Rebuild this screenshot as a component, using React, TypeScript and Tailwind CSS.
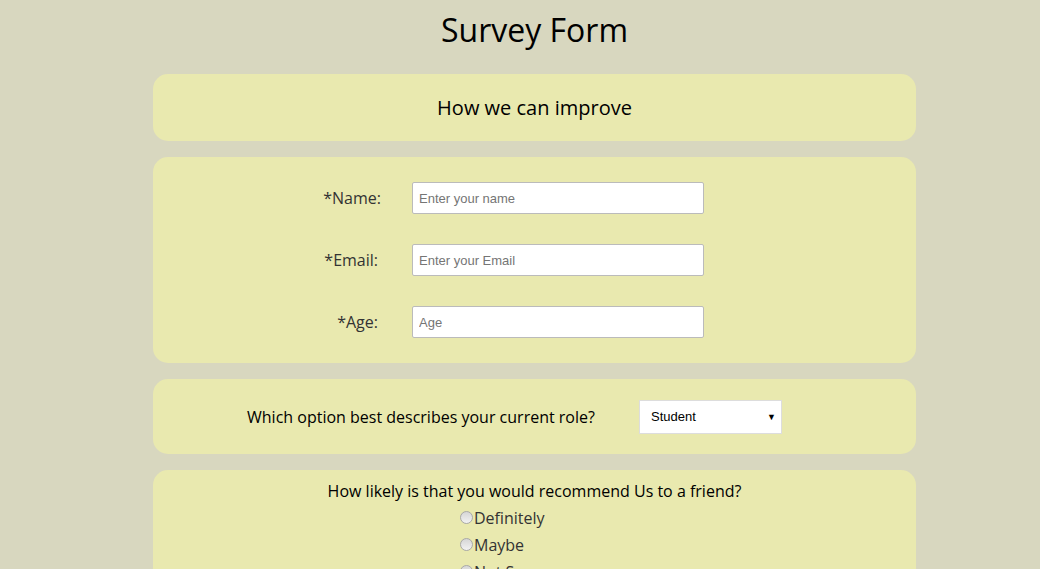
import React from "react"

const card = "bg-[#e9e9af] rounded-[15px]"

function Field({ label, placeholder, type = "text", pad }: { label: string; placeholder: string; type?: string; pad: string }) {
  return (
    <div className="flex items-center h-[32px]">
      <label className={`w-[259px] text-right ${pad} text-[16px] text-[#333]`}>{label}</label>
      <input
        type={type}
        placeholder={placeholder}
        className="w-[292px] h-[32px] bg-white border border-[#bbb] rounded-[2px] px-[6px] text-[13px] font-['Liberation_Sans',Arial,sans-serif] placeholder:text-[#757575] outline-none"
      />
    </div>
  )
}

function Radio({ label }: { label: string }) {
  return (
    <label className="flex items-center h-[27px] text-[16px] text-[#333]">
      <span className="w-[13px] h-[13px] rounded-full border border-[#a8a8a8] bg-gradient-to-b from-[#d6d6d6] to-[#f2f2f2] mr-[1px]" />
      {label}
    </label>
  )
}

export default function App() {
  return (
    <div className="min-h-[569px] bg-[#d8d7bf] font-['Open_Sans',sans-serif] text-black">
      <div className="ml-[153px] w-[763px] pb-10">
        {/* Title */}
        <h1 className="text-[32px] leading-none text-center pt-[14px] pb-[28px]">Survey Form</h1>

        <div className="flex flex-col gap-[16px]">
          <div className={`${card} h-[67px] flex items-center justify-center`}>
            <h2 className="text-[20px]">How we can improve</h2>
          </div>

          <div className={`${card} h-[206px] pt-[25px] flex flex-col gap-[30px]`}>
            <Field label="*Name:" placeholder="Enter your name" pad="pr-[31px]" />
            <Field label="*Email:" placeholder="Enter your Email" type="email" pad="pr-[34px]" />
            <Field label="*Age:" placeholder="Age" type="number" pad="pr-[34px]" />
          </div>

          <div className={`${card} h-[75px] flex items-center pl-[94px]`}>
            <span className="text-[16px] w-[392px]">Which option best describes your current role?</span>
            <div className="relative w-[143px] h-[34px] bg-white border border-[#ddd]">
              <select className="appearance-none w-full h-full bg-transparent pl-[11px] text-[13px] font-['Liberation_Sans',Arial,sans-serif] outline-none">
                <option>Student</option>
                <option>Full Time Job</option>
                <option>Prefer not to say</option>
              </select>
              <span className="absolute right-[5px] top-[9px] text-[9px] pointer-events-none">▼</span>
            </div>
          </div>

          <div className={`${card} pt-[9px] pb-[20px]`}>
            <p className="text-[16px] text-center">How likely is that you would recommend Us to a friend?</p>
            <div className="ml-[307px] mt-[1px]">
              <Radio label="Definitely" />
              <Radio label="Maybe" />
              <Radio label="Not Sure" />
            </div>
          </div>
        </div>
      </div>
    </div>
  )
}
